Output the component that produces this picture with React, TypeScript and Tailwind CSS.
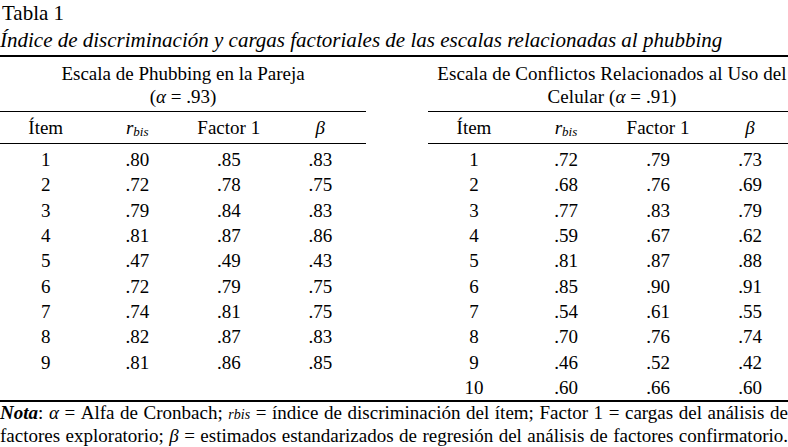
import React from "react";

const left: string[][] = [
  ["1", ".80", ".85", ".83"],
  ["2", ".72", ".78", ".75"],
  ["3", ".79", ".84", ".83"],
  ["4", ".81", ".87", ".86"],
  ["5", ".47", ".49", ".43"],
  ["6", ".72", ".79", ".75"],
  ["7", ".74", ".81", ".75"],
  ["8", ".82", ".87", ".83"],
  ["9", ".81", ".86", ".85"],
];

const right: string[][] = [
  ["1", ".72", ".79", ".73"],
  ["2", ".68", ".76", ".69"],
  ["3", ".77", ".83", ".79"],
  ["4", ".59", ".67", ".62"],
  ["5", ".81", ".87", ".88"],
  ["6", ".85", ".90", ".91"],
  ["7", ".54", ".61", ".55"],
  ["8", ".70", ".76", ".74"],
  ["9", ".46", ".52", ".42"],
  ["10", ".60", ".66", ".60"],
];

function Rbis() {
  return (
    <span className="italic">
      r<span className="text-[13px] relative top-[2px]">bis</span>
    </span>
  );
}

function ColHeads() {
  return (
    <div className="grid grid-cols-4 border-y border-black h-[33px] leading-[30px] pt-[1px] text-center">
      <div>Ítem</div>
      <div>
        <Rbis />
      </div>
      <div>Factor 1</div>
      <div className="italic">β</div>
    </div>
  );
}

function Body({ rows }: { rows: string[][] }) {
  return (
    <div className="pt-[3px]">
      {rows.map((r, i) => (
        <div key={i} className="grid grid-cols-4 h-[25.33px] leading-[25.33px] text-center">
          {r.map((c, j) => (
            <div key={j}>{c}</div>
          ))}
        </div>
      ))}
    </div>
  );
}

export default function App() {
  return (
    <div
      className="w-[788px] h-[447px] overflow-hidden bg-white text-black text-[19px]"
      style={{ fontFamily: '"Liberation Serif", "Times New Roman", serif' }}
    >
      <div className="leading-[26.5px] text-[21px]">
        <div className="pl-[2px]">Tabla 1</div>
        <div className="italic whitespace-nowrap">
          Índice de discriminación y cargas factoriales de las escalas relacionadas al phubbing
        </div>
      </div>
      <div className="mt-[2px] border-t-2 border-black w-[788px]">
        <div className="flex w-[796px] gap-[62px]">
          <div className="w-[366px]">
            <div className="text-center leading-[23px] pt-[5px] pb-[3px]">
              Escala de Phubbing en la Pareja
              <br />(<span className="italic">α</span> = .93)
            </div>
            <ColHeads />
            <Body rows={left} />
          </div>
          <div className="w-[368px]">
            <div className="text-center leading-[23px] pt-[5px] pb-[3px] tracking-[0.1px]">
              Escala de Conflictos Relacionados al Uso del Celular (<span className="italic">α</span> = .91)
            </div>
            <ColHeads />
            <Body rows={right} />
          </div>
        </div>
      </div>
      <div className="border-t-2 border-black w-[788px] leading-[21px] text-justify [text-align-last:justify]">
        <span className="italic font-bold">Nota</span>: <span className="italic">α</span> = Alfa de Cronbach;{" "}
        <span className="italic text-[14px]">rbis</span> = índice de discriminación del ítem; Factor 1 = cargas del
        análisis de factores exploratorio; <span className="italic">β</span> = estimados estandarizados de regresión
        del análisis de factores confirmatorio.
      </div>
    </div>
  );
}
